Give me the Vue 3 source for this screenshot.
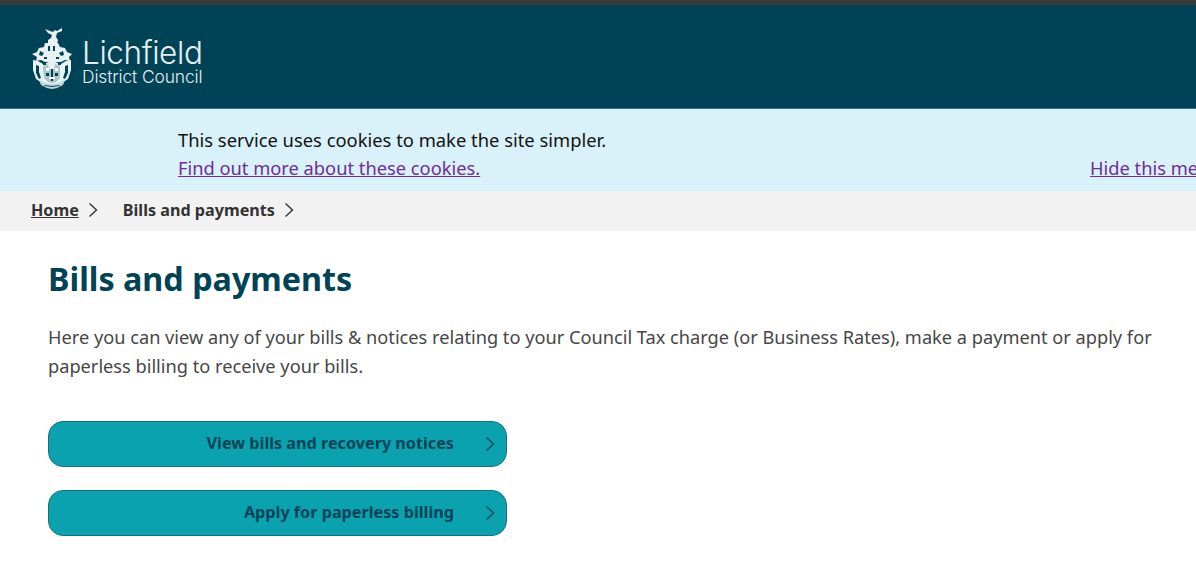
<template>
  <div class="page">
    <div class="topbar"></div>
    <header class="header">
      <div class="logo">
        <svg class="crest" viewBox="0 0 42 62" width="42" height="62">
          <!-- figure on top -->
          <path d="M31 1l-5 3-2-1-2 2-3-1-5-2 3 4 4 2-1 3-3 2 0 4 5 2 4-2 1-4-2-3 1-4 5-2z" fill="#e9f2f3" />
          <!-- helm and mantling -->
          <path d="M14 16h13l2 4 5 1 2 4 5 2-3 3 1 4-5-1-4 2H14l-4-2-5 1 1-4-5-3 5-2 2-4 5-1z" fill="#e9f2f3" />
          <path d="M9 24l4 2-2 3-3-1zM32 24l-4 2 2 3 3-1zM17 19h2v5h-2zM22 19h2v5h-2zM13 30h3v2h-3zM25 30h3v2h-3z" fill="#004357" />
          <!-- shield -->
          <path d="M2 33l5 1 5 3 9-3 9 3 5-3 5-1 0 10-3 9-6 4-10 3-10-3-6-4-3-9z" fill="#e9f2f3" />
          <path d="M12 39l5-2 1 5 5 0 1-5 5 2 0 12-4 4-4 1-4-1-4-4z" fill="#a9c6cc" />
          <path d="M5 38l3 1 0 6 2 6-2 1-3-6zM37 38l-3 1 0 6-2 6 2 1 3-6zM15 46h3v3h-3zM24 46h3v3h-3zM20 42h2v12h-2zM12 36h3v2h-3zM27 36h3v2h-3z" fill="#004357" />
          <path d="M15 41h3v3h-3zM24 41h3v3h-3zM18 50h6v2h-6z" fill="#fff" />
          <!-- motto scroll -->
          <path d="M8 53l6 3 7 1 7-1 6-3-2 5-6 3-5 1-5-1-6-3z" fill="#c4d8dc" />
          <path d="M13 58l8 1 8-1-1 1-7 1-7-1z" fill="#004357" />
        </svg>
        <div class="logo-text">
          <span class="logo-name">Lichfield</span>
          <span class="logo-sub">District Council</span>
        </div>
      </div>
    </header>
    <div class="cookies">
      <div class="cookies__text">
        <p>This service uses cookies to make the site simpler.</p>
        <a href="#">Find out more about these cookies.</a>
      </div>
      <a class="cookies__hide" href="#">Hide this message</a>
    </div>
    <nav class="crumbs">
      <a href="#" class="crumb-link">Home</a>
      <svg class="crumb-arrow" viewBox="0 0 10 16" width="10" height="16"><path d="M1.5 1.5L8.5 8l-7 6.5" /></svg>
      <span class="crumb-current">Bills and payments</span>
      <svg class="crumb-arrow" viewBox="0 0 10 16" width="10" height="16"><path d="M1.5 1.5L8.5 8l-7 6.5" /></svg>
    </nav>
    <main class="main">
      <h1>Bills and payments</h1>
      <p class="intro">Here you can view any of your bills &amp; notices relating to your Council Tax charge (or Business Rates), make a payment or apply for paperless billing to receive your bills.</p>
      <div class="buttons">
        <a v-for="b in buttons" :key="b" href="#" class="btn">
          <span>{{ b }}</span>
          <svg viewBox="0 0 10 16" width="10" height="16"><path d="M1.5 1.5L8.5 8l-7 6.5" /></svg>
        </a>
      </div>
    </main>
  </div>
</template>

<script setup>
const buttons = ['View bills and recovery notices', 'Apply for paperless billing'];
</script>

<style>
html, body {
  margin: 0;
  background: #fff;
  overflow: hidden;
}
</style>

<style scoped>
.page {
  width: 1196px;
  height: 570px;
  overflow: hidden;
  font-family: "Noto Sans", "Open Sans", sans-serif;
  color: #3b3b3b;
}

.topbar {
  height: 5px;
  background: #3a3a3a;
}

.header {
  height: 104px;
  background: #004357;
  display: flex;
  align-items: center;
  padding-left: 31px;
  border-bottom: 1px solid #2c6f82;
  box-sizing: border-box;
}

.logo {
  display: flex;
  align-items: center;
  gap: 9px;
  margin-top: 2px;
}

.logo-text {
  display: flex;
  flex-direction: column;
  color: #e6f0f2;
  font-family: Inter, sans-serif;
  font-weight: 300;
  margin-top: 7px;
}

.logo-name {
  font-size: 31.5px;
  line-height: 31px;
  letter-spacing: -0.4px;
}

.logo-sub {
  font-size: 17.4px;
  line-height: 17px;
  letter-spacing: -0.12px;
}

.cookies {
  height: 82px;
  background: #d9f1f8;
  position: relative;
  padding-left: 178px;
  box-sizing: border-box;
  font-size: 18.3px;
  line-height: 28px;
  white-space: nowrap;
  overflow: hidden;
}

.cookies__text {
  padding-top: 17px;
}

.cookies p {
  margin: 0;
  color: #111;
  font-size: 18.38px;
}

.cookies a {
  color: #6f2c9b;
}

.cookies__hide {
  position: absolute;
  left: 1090px;
  top: 45px;
}

.crumbs {
  height: 40px;
  background: #f2f2f2;
  display: flex;
  align-items: center;
  padding-left: 31px;
  padding-bottom: 2px;
  box-sizing: border-box;
  font-size: 16.15px;
  font-weight: 700;
  color: #333;
}

.crumb-link {
  color: #333;
}

.crumb-arrow {
  margin-left: 9px;
  fill: none;
  stroke: #333;
  stroke-width: 1.4;
}

.crumb-arrow + .crumb-current {
  margin-left: 25px;
}

.main {
  padding: 25px 0 0 48px;
}

h1 {
  margin: 0;
  font-size: 32.3px;
  line-height: 44px;
  font-weight: 700;
  color: #004357;
}

.intro {
  margin: 23px 0 0;
  width: 1130px;
  font-size: 18.22px;
  line-height: 29px;
  color: #464646;
}

.buttons {
  margin-top: 40px;
  display: flex;
  flex-direction: column;
  gap: 23px;
}

.btn {
  width: 459px;
  height: 46px;
  box-sizing: border-box;
  display: flex;
  align-items: center;
  justify-content: flex-end;
  gap: 31px;
  padding-right: 11px;
  background: #09a2ae;
  border: 1px solid #14707f;
  border-radius: 15px;
  font-size: 16.2px;
  font-weight: 700;
  color: #004357;
  text-decoration: none;
}

.btn span {
  margin-bottom: 2px;
}

.btn svg {
  fill: none;
  stroke: #004357;
  stroke-width: 1.4;
}
</style>
